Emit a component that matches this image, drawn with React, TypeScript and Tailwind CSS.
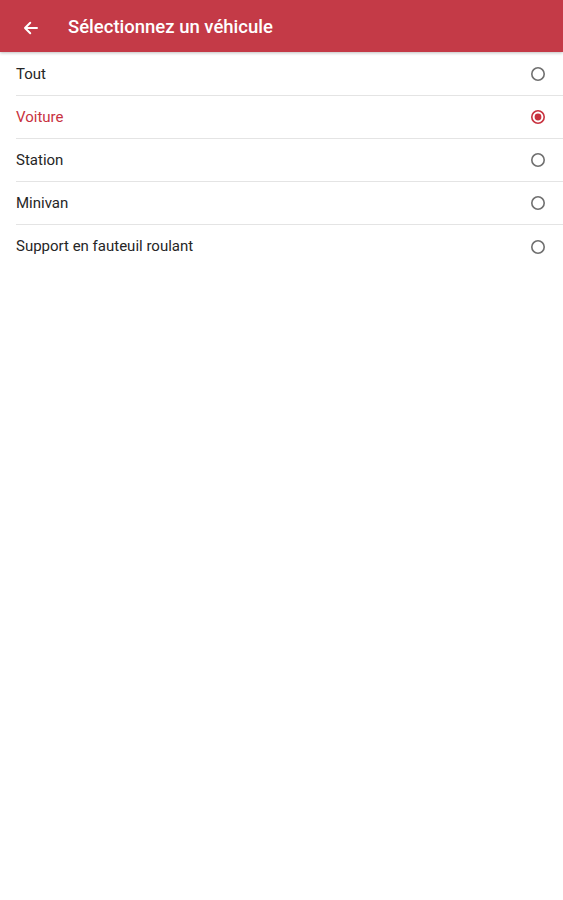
import { useState } from "react"

const OPTIONS = ["Tout", "Voiture", "Station", "Minivan", "Support en fauteuil roulant"]

function Radio({ checked }: { checked: boolean }) {
  return (
    <svg width="16" height="16" viewBox="0 0 16 16">
      <circle cx="8" cy="8" r="6.2" fill="none" stroke={checked ? "#c8323f" : "#6f6f6f"} strokeWidth="1.6" />
      {checked && <circle cx="8" cy="8" r="3.4" fill="#c8323f" />}
    </svg>
  )
}

export default function App() {
  const [selected, setSelected] = useState("Voiture")

  return (
    <div className="min-h-[900px] bg-white font-['Roboto',sans-serif]">
      <div className="h-[52px] pt-[4px] bg-[#c43a47] flex items-center shadow-[0_1px_3px_rgba(0,0,0,0.25)]">
        <div className="w-[68px] flex items-center pl-[22px]">
          <svg width="18" height="18" viewBox="0 0 24 24" fill="none" stroke="#fff" strokeWidth="2.6" strokeLinecap="round" strokeLinejoin="round">
            <path d="M20 12H5M11 5l-7 7 7 7" />
          </svg>
        </div>
        <h1 className="text-white text-[18.5px] font-medium">Sélectionnez un véhicule</h1>
      </div>

      <div className="pt-px">
        {OPTIONS.map((o, i) => (
          <button
            key={o}
            onClick={() => setSelected(o)}
            className="w-full flex pl-4 text-left"
          >
            <div
              className={`flex-1 h-[43px] flex items-center justify-between pr-[17px] ${
                i < OPTIONS.length - 1 ? "border-b border-[#e4e4e4]" : ""
              }`}
            >
              <span className={`text-[15px] ${selected === o ? "text-[#c8323f]" : "text-[#262626]"}`}>{o}</span>
              <Radio checked={selected === o} />
            </div>
          </button>
        ))}
      </div>
    </div>
  )
}
